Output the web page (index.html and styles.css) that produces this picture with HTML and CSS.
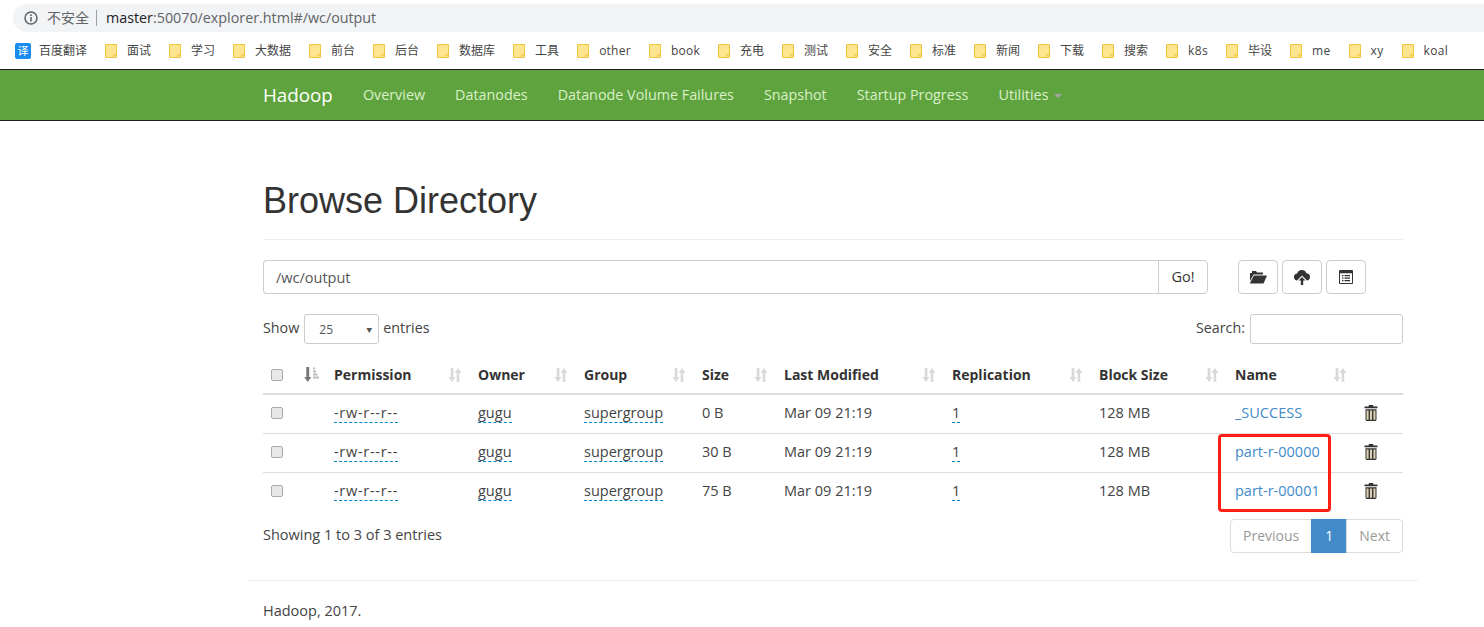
FILE: index.html
```html
<!DOCTYPE html>
<html lang="zh">
<head>
<meta charset="utf-8">
<title>Browsing HDFS</title>
<link rel="stylesheet" href="styles.css">
</head>
<body>
<svg class="defs" width="0" height="0" aria-hidden="true">
  <symbol id="folder" viewBox="0 0 12 14"><path d="M.5.5h11v10.500h-3v2.500h-8z" fill="#fde68f" stroke="#f0c53f"/><path d="M8.500 11h3v2.500h-3z" fill="#fde68f" stroke="#f0c53f"/></symbol>
  <symbol id="trash" viewBox="0 0 14 16"><path d="M5 0h4l.5 1.500h4v1.700H.5V1.500h4z" fill="#333"/><path d="M1.500 4.200h11V15l-1 1h-9l-1-1z" fill="#333"/><path d="M2.500 5.500h2.100V14.800H2.500zM5.950 5.500h2.100V14.800H5.950zM9.400 5.500h2.100V14.800H9.400z" fill="#dccfb2"/></symbol>
  <symbol id="sort" viewBox="0 0 14 14"><path d="M2.700 0h2.700v9h2.100L4.050 14 .5 9h2.200z" fill="currentColor"/><path d="M10 0l3.500 5h-2.200v9H8.700V5H6.500z" fill="currentColor"/></symbol>
</svg>

<div class="chrome">
  <div class="omnibox">
    <svg class="info" viewBox="0 0 14 14"><circle cx="7" cy="7" r="6" fill="none" stroke="#5f6368" stroke-width="1.500"/><path d="M6.200 6h1.600v4.500H6.200zM6.200 3.300h1.600v1.600H6.200z" fill="#5f6368"/></svg>
    <span class="insecure">不安全</span>
    <span class="url"><span class="url-host">master</span>:50070/explorer.html#/wc/output</span>
  </div>
  <div class="bookmarks">
    <span class="bm"><span class="yi">译</span>百度翻译</span>
    <span class="bm"><svg class="fd"><use href="#folder"/></svg>面试</span>
    <span class="bm"><svg class="fd"><use href="#folder"/></svg>学习</span>
    <span class="bm"><svg class="fd"><use href="#folder"/></svg>大数据</span>
    <span class="bm"><svg class="fd"><use href="#folder"/></svg>前台</span>
    <span class="bm"><svg class="fd"><use href="#folder"/></svg>后台</span>
    <span class="bm"><svg class="fd"><use href="#folder"/></svg>数据库</span>
    <span class="bm"><svg class="fd"><use href="#folder"/></svg>工具</span>
    <span class="bm bm-tight"><svg class="fd"><use href="#folder"/></svg>other</span>
    <span class="bm bm-tight"><svg class="fd"><use href="#folder"/></svg>book</span>
    <span class="bm"><svg class="fd"><use href="#folder"/></svg>充电</span>
    <span class="bm"><svg class="fd"><use href="#folder"/></svg>测试</span>
    <span class="bm"><svg class="fd"><use href="#folder"/></svg>安全</span>
    <span class="bm"><svg class="fd"><use href="#folder"/></svg>标准</span>
    <span class="bm"><svg class="fd"><use href="#folder"/></svg>新闻</span>
    <span class="bm"><svg class="fd"><use href="#folder"/></svg>下载</span>
    <span class="bm"><svg class="fd"><use href="#folder"/></svg>搜索</span>
    <span class="bm bm-latin"><svg class="fd"><use href="#folder"/></svg>k8s</span>
    <span class="bm"><svg class="fd"><use href="#folder"/></svg>毕设</span>
    <span class="bm bm-latin"><svg class="fd"><use href="#folder"/></svg>me</span>
    <span class="bm bm-latin"><svg class="fd"><use href="#folder"/></svg>xy</span>
    <span class="bm bm-latin"><svg class="fd"><use href="#folder"/></svg>koal</span>
  </div>
</div>

<nav class="navbar">
  <div class="nav-inner">
    <a class="brand">Hadoop</a>
    <a class="nav-link">Overview</a>
    <a class="nav-link">Datanodes</a>
    <a class="nav-link">Datanode Volume Failures</a>
    <a class="nav-link">Snapshot</a>
    <a class="nav-link">Startup Progress</a>
    <a class="nav-link">Utilities <span class="caret"></span></a>
  </div>
</nav>

<main class="container">
  <div class="page-header"><h1>Browse Directory</h1></div>

  <div class="path-row">
    <div class="path-group">
      <input class="path-input" type="text" value="/wc/output">
      <button class="go" type="button">Go!</button>
    </div>
    <div class="tools">
      <button class="tool" type="button"><svg class="icon-folder" viewBox="0 0 18 14"><path d="M1 3h2V1h4l1 1.500h6v2H4.500L1 11z" fill="#333"/><path d="M4.800 5.500H18l-3.500 8H.8z" fill="#333"/></svg></button>
      <button class="tool" type="button"><svg class="icon-cloud" viewBox="0 0 16 15"><path d="M8 0a4.500 4.500 0 0 1 4.300 3.200A3.800 3.800 0 0 1 16 7c0 2-1.500 3.500-3 3.500L8 5.500l-5 5C1.300 10.500 0 9 0 7a3.500 3.500 0 0 1 3.200-3.400A4.800 4.800 0 0 1 8 0z" fill="#333"/><path d="M8 7l3.500 3.500H9.200V15H6.800V10.500H4.500z" fill="#333"/></svg></button>
      <button class="tool" type="button"><svg class="icon-list" viewBox="0 0 14 14"><path d="M.5.500h13v13H.5z" fill="#fff" stroke="#333"/><path d="M1 1h12v2.200H1zM3 5h1.500v1.300H3zM5.500 5H11v1.300H5.500zM3 7.500h1.500v1.300H3zM5.500 7.500H11v1.300H5.500zM3 10h1.500v1.300H3zM5.500 10H11v1.300H5.500z" fill="#333"/></svg></button>
    </div>
  </div>

  <div class="controls">
    <label class="ctl"><span class="ctl-text">Show</span> <span class="select">25<span class="sel-arrow">▼</span></span> <span class="ctl-text">entries</span></label>
    <label class="ctl"><span class="ctl-text">Search:</span> <input class="search" type="text"></label>
  </div>

  <div class="table-wrap">
    <table class="files">
      <colgroup>
        <col class="c-check"><col class="c-sort"><col class="c-perm"><col class="c-owner"><col class="c-group"><col class="c-size"><col class="c-mod"><col class="c-rep"><col class="c-block"><col class="c-name"><col class="c-del">
      </colgroup>
      <thead>
        <tr>
          <th><span class="cb"></span></th>
          <th><svg class="order-icon" viewBox="0 0 15 15"><path d="M2.300 0h2.900v10h2.100L3.750 15 .2 10h2.100z" fill="#777"/><path d="M9 .5h2v2H9zM9 3.500h3v2H9zM9 6.500h4.500v2H9zM9 9.500h6v2H9z" fill="#bbb"/></svg></th>
          <th><span class="th-in">Permission<svg class="sort"><use href="#sort"/></svg></span></th>
          <th><span class="th-in">Owner<svg class="sort"><use href="#sort"/></svg></span></th>
          <th><span class="th-in">Group<svg class="sort"><use href="#sort"/></svg></span></th>
          <th><span class="th-in">Size<svg class="sort"><use href="#sort"/></svg></span></th>
          <th><span class="th-in">Last Modified<svg class="sort"><use href="#sort"/></svg></span></th>
          <th><span class="th-in">Replication<svg class="sort"><use href="#sort"/></svg></span></th>
          <th><span class="th-in">Block Size<svg class="sort"><use href="#sort"/></svg></span></th>
          <th><span class="th-in">Name<svg class="sort"><use href="#sort"/></svg></span></th>
          <th></th>
        </tr>
      </thead>
      <tbody>
        <tr>
          <td><span class="cb"></span></td><td></td>
          <td><span class="ed perm">-rw-r--r--</span></td><td><span class="ed">gugu</span></td><td><span class="ed">supergroup</span></td>
          <td>0 B</td><td>Mar 09 21:19</td><td><span class="ed">1</span></td><td>128 MB</td>
          <td><a class="file">_SUCCESS</a></td><td><svg class="del"><use href="#trash"/></svg></td>
        </tr>
        <tr>
          <td><span class="cb"></span></td><td></td>
          <td><span class="ed perm">-rw-r--r--</span></td><td><span class="ed">gugu</span></td><td><span class="ed">supergroup</span></td>
          <td>30 B</td><td>Mar 09 21:19</td><td><span class="ed">1</span></td><td>128 MB</td>
          <td><a class="file">part-r-00000</a></td><td><svg class="del"><use href="#trash"/></svg></td>
        </tr>
        <tr>
          <td><span class="cb"></span></td><td></td>
          <td><span class="ed perm">-rw-r--r--</span></td><td><span class="ed">gugu</span></td><td><span class="ed">supergroup</span></td>
          <td>75 B</td><td>Mar 09 21:19</td><td><span class="ed">1</span></td><td>128 MB</td>
          <td><a class="file">part-r-00001</a></td><td><svg class="del"><use href="#trash"/></svg></td>
        </tr>
      </tbody>
    </table>
    <div class="redbox"></div>
  </div>

  <div class="table-foot">
    <div class="showing">Showing 1 to 3 of 3 entries</div>
    <div class="pagination"><a class="pg pg-prev">Previous</a><a class="pg pg-cur">1</a><a class="pg pg-next">Next</a></div>
  </div>
</main>

<footer class="footer"><p>Hadoop, 2017.</p></footer>
</body>
</html>
```
FILE: styles.css
```css
* { box-sizing: border-box; }
html, body { margin: 0; padding: 0; }
body {
  background: #fff;
  color: #444;
  font: 14.5px/20px "Open Sans", "Noto Sans CJK SC", sans-serif;
  overflow: hidden;
  height: 627px;
}
.defs { position: absolute; }

.chrome { height: 69px; padding-top: 4px; background: #fff; }
.omnibox {
  display: flex; align-items: center;
  height: 28px; margin-left: 13px;
  padding-left: 11px;
  background: #f1f3f4;
  border-radius: 14px 0 0 14px;
  font-size: 14.3px;
}
.info { width: 14px; height: 14px; margin-right: 9px; }
.insecure { color: #5f6368; font-size: 14px; padding-right: 7px; border-right: 1px solid #9aa0a6; line-height: 16px; margin-right: 9px; }
.url { color: #5f6368; }
.url-host { color: #202124; }

.bookmarks {
  display: flex; align-items: center; gap: 18px;
  height: 37px; padding: 1px 0 0 15px;
  font-size: 12px; color: #444; white-space: nowrap;
}
.bm { display: flex; align-items: center; }
.bm-latin { letter-spacing: .35px; }
.bm-tight { letter-spacing: .25px; }
.fd { width: 12px; height: 14px; margin-right: 10px; flex: none; }
.yi {
  width: 16px; height: 16px; margin-right: 8px;
  background: #1a8cf0; color: #fff; border-radius: 2px;
  font-size: 11px; line-height: 16px; text-align: center;
}

.navbar {
  height: 52px;
  background: #5fa33e;
  border-top: 1px solid #1d1d1d;
  border-bottom: 1px solid #1d1d1d;
}
.nav-inner { display: flex; align-items: center; height: 100%; width: 1170px; margin-left: 248px; padding: 0 15px; }
.brand { color: #fff; font-size: 18.8px; margin-right: 30px; }
.nav-link { color: #d9f0c8; font-size: 14.35px; margin-right: 30px; }
.caret {
  display: inline-block; vertical-align: middle; margin-left: 2px;
  border-top: 4px solid #a3a3a3; border-left: 4px solid transparent; border-right: 4px solid transparent;
}

.container { width: 1170px; margin-left: 248px; padding: 0 15px; }
.page-header { padding: 60px 0 18px; border-bottom: 1px solid #eee; margin-bottom: 20px; }
h1 { margin: 0; font: 500 36px/40px "Liberation Sans", sans-serif; color: #333; }

.path-row { display: flex; align-items: flex-start; }
.path-group { display: flex; width: 945px; height: 34px; }
.path-input {
  flex: 1; height: 34px; padding: 0 12px;
  border: 1px solid #ccc; border-right: 0; border-radius: 4px 0 0 4px;
  font: inherit; color: #555; outline: 0;
}
.go {
  width: 50px; height: 34px; padding: 0;
  border: 1px solid #ccc; border-radius: 0 4px 4px 0; background: #fff;
  font: inherit; color: #333;
}
.tools { display: flex; gap: 4px; margin-left: 30px; }
.tool {
  display: flex; align-items: center; justify-content: center;
  width: 40px; height: 34px; padding: 0;
  border: 1px solid #ccc; border-radius: 4px; background: #fff;
}
.icon-folder { width: 18px; height: 14px; }
.icon-cloud { width: 16px; height: 15px; }
.icon-list { width: 14px; height: 14px; }

.controls { display: flex; justify-content: space-between; align-items: center; height: 30px; margin-top: 20px; }
.ctl { display: flex; align-items: center; gap: 4px; font-size: 14.3px; line-height: 18px; }
.ctl-text { padding-bottom: 2px; }
.select {
  display: flex; align-items: center; justify-content: space-between;
  width: 75px; height: 30px; margin-left: 1px; padding: 2px 6px 0 14px;
  border: 1px solid #ccc; border-radius: 3px;
  font-size: 12px; color: #555;
}
.sel-arrow { font-size: 6px; color: #555; }
.search { width: 153px; height: 30px; margin-left: 1px; border: 1px solid #ccc; border-radius: 3px; outline: 0; }

.table-wrap { position: relative; margin-top: 10px; }
.files { width: 1140px; table-layout: fixed; border-collapse: collapse; }
.c-check { width: 32px; } .c-sort { width: 31px; } .c-perm { width: 144px; } .c-owner { width: 106px; }
.c-group { width: 118px; } .c-size { width: 82px; } .c-mod { width: 168px; } .c-rep { width: 147px; }
.c-block { width: 136px; } .c-name { width: 128px; } .c-del { width: 48px; }
.files th, .files td { padding: 0 8px; text-align: left; vertical-align: middle; white-space: nowrap; }
.files th { height: 40px; padding-top: 2px; font-size: 14px; font-weight: 700; color: #333; border-bottom: 2px solid #ddd; }
.files td { height: 39px; padding-bottom: 2px; border-bottom: 1px solid #ddd; }
.files tbody tr:last-child td { border-bottom: 0; }
.th-in { display: flex; align-items: center; justify-content: space-between; }
.sort { width: 14px; height: 14px; color: #d9d9d9; }
.order-icon { width: 15px; height: 15px; display: block; margin-left: 1px; }
.cb {
  display: block; width: 12px; height: 12px;
  background: #e8e8e8; border: 1px solid #aaa; border-radius: 2px;
}
.ed { border-bottom: 1px dashed #08c; }
.perm { letter-spacing: .7px; }
.file { color: #428bca; }
.del { width: 14px; height: 16px; display: block; margin-left: 1px; }
.redbox {
  position: absolute; left: 955px; top: 80px; width: 113px; height: 78px;
  border: 3px solid #ff1e14; border-radius: 4px;
}

.table-foot { display: flex; justify-content: space-between; align-items: flex-start; margin-top: 8px; }
.showing { padding-top: 6px; }
.pagination { display: flex; height: 34px; font-size: 14px; }
.pg { padding: 6px 12px; border: 1px solid #ddd; line-height: 20px; color: #999; margin-left: -1px; }
.pg-prev { border-radius: 4px 0 0 4px; }
.pg-cur { background: #428bca; border-color: #428bca; color: #fff; padding: 6px 13px; }
.pg-next { border-radius: 0 4px 4px 0; }

.footer { width: 1170px; margin: 27px 0 0 248px; padding: 20px 15px 0; border-top: 1px solid #eee; }
.footer p { margin: 0; }
```
